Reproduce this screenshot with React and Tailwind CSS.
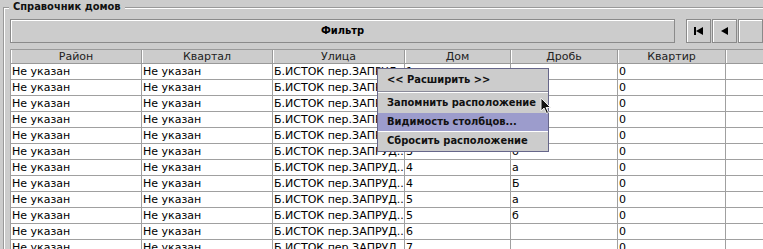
import React from 'react';

const columns = [
    { title: 'Район', w: 'w-[131px]' },
    { title: 'Квартал', w: 'w-[131px]' },
    { title: 'Улица', w: 'w-[132px]' },
    { title: 'Дом', w: 'w-[106px]' },
    { title: 'Дробь', w: 'w-[107px]' },
    { title: 'Квартир', w: 'w-[108px]' },
    { title: '', w: 'w-[120px]' },
];

const houses = [
    ['1', 'а'], ['1', 'б'], ['2', 'а'], ['2', 'б'], ['3', 'а'], ['3', 'б'],
    ['4', 'а'], ['4', 'Б'], ['5', 'а'], ['5', 'б'], ['6', ''], ['7', ''],
];

const rows = houses.map(([dom, drob]) => [
    'Не указан', 'Не указан', 'Б.ИСТОК пер.ЗАПРУД...', dom, drob, '0', '',
]);

function NavButton({ children }) {
    return (
        <div className="w-[25px] h-[24px] shrink-0 border border-[#8a8a8a] shadow-[inset_1px_1px_0_#ffffff] flex items-center justify-center">
            {children}
        </div>
    );
}

function App() {
    return (
        <div className="relative w-[763px] h-[249px] overflow-hidden bg-[#cccccc] font-['DejaVu_Sans',sans-serif] text-[11px] text-black">
            {/* group box */}
            <div className="relative mt-[7px] ml-[3px] h-[260px] border-l border-t border-[#999999] shadow-[inset_1px_1px_0_#ffffff]">
                <span className="absolute -top-[8px] left-[5px] px-[4px] bg-[#cccccc] font-bold leading-[14px] text-[#111] font-['DejaVu_Sans_Condensed','DejaVu_Sans',sans-serif] whitespace-nowrap">
                    Справочник домов
                </span>

                <div className="pt-[11px] pl-[6px]">
                    <div className="flex items-center">
                        <div className="w-[686px] h-[24px] border border-[#8a8a8a] shadow-[inset_1px_1px_0_#ffffff] flex items-center justify-center font-bold font-['DejaVu_Sans_Condensed','DejaVu_Sans',sans-serif]">
                            Фильтр
                        </div>
                        <div className="ml-[11px] flex gap-[1px]">
                            <NavButton>
                                <svg width="10" height="8" viewBox="0 0 10 8">
                                    <rect x="0" y="0" width="2" height="8" fill="#000" />
                                    <polygon points="2,4 9,0 9,8" fill="#000" />
                                </svg>
                            </NavButton>
                            <NavButton>
                                <svg width="8" height="8" viewBox="0 0 8 8">
                                    <polygon points="0,4 7,0 7,8" fill="#000" />
                                </svg>
                            </NavButton>
                            <NavButton />
                        </div>
                    </div>

                    {/* table */}
                    <div className="mt-[6px] border-l border-[#a0a0a0] w-[900px]">
                        <div className="flex h-[15px] border-t border-b border-[#999999]">
                            {columns.map((c, i) => (
                                <div
                                    key={i}
                                    className={`${c.w} shrink-0 border-r border-[#999999] shadow-[inset_1px_0_0_#ffffff] text-center leading-[13px] text-[#222]`}
                                >
                                    {c.title}
                                </div>
                            ))}
                        </div>
                        {rows.map((r, ri) => (
                            <div key={ri} className="flex h-[16px] bg-white border-b border-[#a0a0a0]">
                                {r.map((v, ci) => (
                                    <div
                                        key={ci}
                                        className={`${columns[ci].w} shrink-0 border-r border-[#a0a0a0] pl-[1px] leading-[15px] whitespace-nowrap overflow-hidden`}
                                    >
                                        {v}
                                    </div>
                                ))}
                            </div>
                        ))}
                    </div>
                </div>
            </div>

            {/* popup menu */}
            <div className="absolute left-[377px] top-[68px] w-[172px] border border-[#66668a] bg-[#cccccc] font-bold text-[#111] whitespace-nowrap font-['DejaVu_Sans_Condensed','DejaVu_Sans',sans-serif]">
                <div className="h-[22px] pl-[9px] flex items-center">&lt;&lt; Расширить &gt;&gt;</div>
                <div className="h-[1px] bg-[#8a8a99]" />
                <div className="h-[1px] bg-white" />
                <div className="h-[20px] pl-[9px] flex items-center">Запомнить расположение</div>
                <div className="h-[18px] pl-[9px] flex items-center bg-[#9c9ccc]">Видимость столбцов...</div>
                <div className="h-[1px] bg-white" />
                <div className="h-[19px] pl-[9px] flex items-center">Сбросить расположение</div>
            </div>

            {/* mouse cursor */}
            <svg className="absolute left-[540px] top-[97px]" width="12" height="18" viewBox="0 0 12 18">
                <path d="M1 1 L1 14 L4 11 L6.5 16.5 L8.5 15.5 L6 10.5 L10.5 10.5 Z" fill="#111" stroke="#eee" strokeWidth="1" />
            </svg>
        </div>
    );
}

export default App;
